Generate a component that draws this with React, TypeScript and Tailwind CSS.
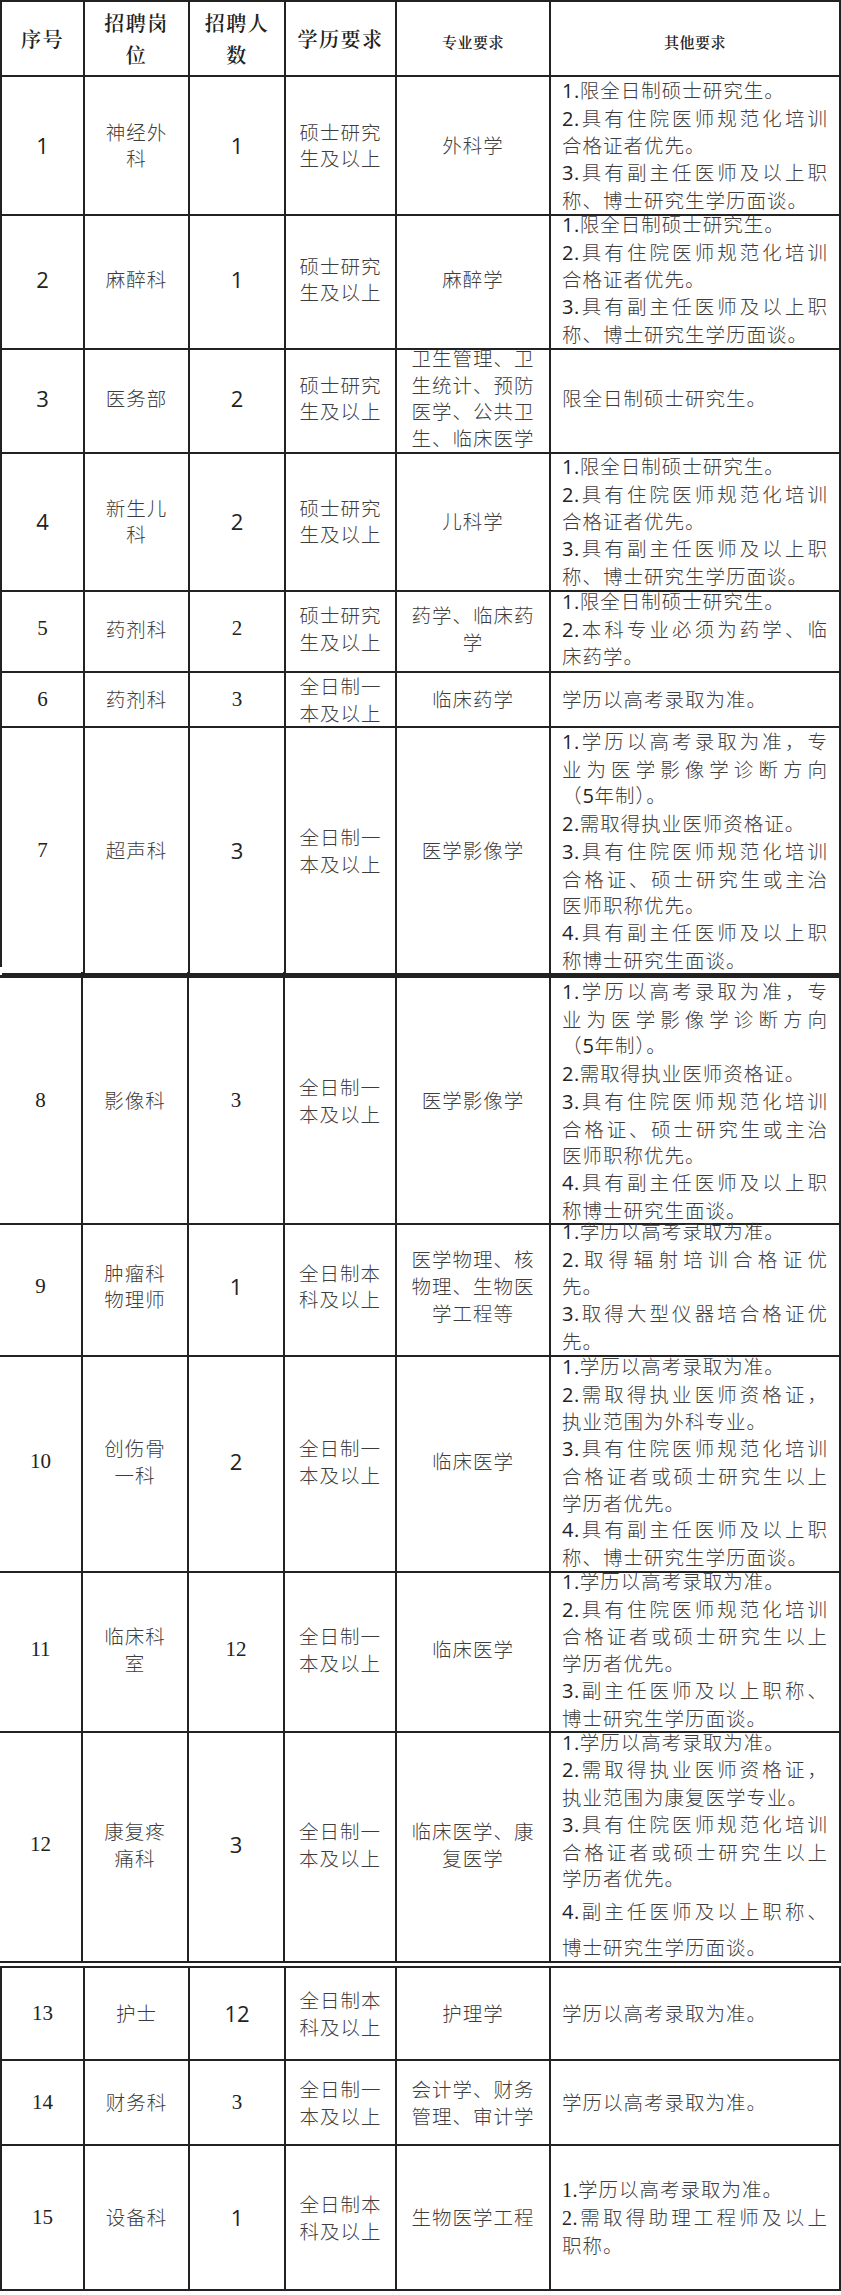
import React from "react";

type Line = string | { t: string; cls: string };
type Row = {
  seq: string;
  seqSerif: boolean;
  post: string[];
  count: string;
  countSerif: boolean;
  edu: string[];
  major: string[];
  other: Line[];
  h: string;
  prefixSerif?: boolean;
};

const BODY = "font-['Noto_Sans_CJK_SC','Noto_Sans',sans-serif] font-light text-[19.5px] tracking-[1px] leading-[26.7px] text-[#3d3d3d]";
const SANS_NUM = "font-['Open_Sans','Noto_Sans',sans-serif] text-[22px] text-[#222]";
const SERIF_NUM = "font-['Liberation_Serif',serif] text-[21px] text-[#222]";
const HEAD = "font-['Noto_Serif_CJK_SC','Noto_Sans_CJK_SC',serif] font-semibold text-[#222]";

const colsA = "grid grid-cols-[83px_105px_96px_111px_154px_290px]";
const colsB = "grid grid-cols-[83px_106px_96px_112px_154px_290px]";
const cellBase = "border-r-2 border-b-2 border-[#222] flex items-center justify-center text-center";

const otherMain: Line[] = [
  "1.限全日制硕士研究生。",
  "2.具有住院医师规范化培训",
  "合格证者优先。",
  "3.具有副主任医师及以上职",
  "称、博士研究生学历面谈。",
];

const otherImg: Line[] = [
  "1.学历以高考录取为准，专",
  "业为医学影像学诊断方向",
  "（5年制）。",
  "2.需取得执业医师资格证。",
  "3.具有住院医师规范化培训",
  "合格证、硕士研究生或主治",
  "医师职称优先。",
  "4.具有副主任医师及以上职",
  "称博士研究生面谈。",
];

const master = ["硕士研究", "生及以上"];
const fullOne = ["全日制一", "本及以上"];
const fullBen = ["全日制本", "科及以上"];

const rowsA: Row[] = [
  { seq: "1", seqSerif: false, post: ["神经外", "科"], count: "1", countSerif: false, edu: master, major: ["外科学"], other: otherMain, h: "h-[134px]" },
  { seq: "2", seqSerif: false, post: ["麻醉科"], count: "1", countSerif: false, edu: master, major: ["麻醉学"], other: otherMain, h: "h-[134px]" },
  { seq: "3", seqSerif: false, post: ["医务部"], count: "2", countSerif: false, edu: master, major: ["卫生管理、卫", "生统计、预防", "医学、公共卫", "生、临床医学"], other: ["限全日制硕士研究生。"], h: "h-[108px]" },
  { seq: "4", seqSerif: false, post: ["新生儿", "科"], count: "2", countSerif: false, edu: master, major: ["儿科学"], other: otherMain, h: "h-[134px]" },
  { seq: "5", seqSerif: true, post: ["药剂科"], count: "2", countSerif: true, edu: master, major: ["药学、临床药", "学"], other: ["1.限全日制硕士研究生。", "2.本科专业必须为药学、临", "床药学。"], h: "h-[86px]" },
  { seq: "6", seqSerif: true, post: ["药剂科"], count: "3", countSerif: true, edu: fullOne, major: ["临床药学"], other: ["学历以高考录取为准。"], h: "h-[55px]" },
  { seq: "7", seqSerif: true, post: ["超声科"], count: "3", countSerif: false, edu: fullOne, major: ["医学影像学"], other: otherImg, h: "h-[239px]" },
];

const rowsB: Row[] = [
  { seq: "8", seqSerif: true, post: ["影像科"], count: "3", countSerif: true, edu: fullOne, major: ["医学影像学"], other: otherImg, h: "h-[240px]" },
  { seq: "9", seqSerif: true, post: ["肿瘤科", "物理师"], count: "1", countSerif: false, edu: fullBen, major: ["医学物理、核", "物理、生物医", "学工程等"], other: ["1.学历以高考录取为准。", "2.取得辐射培训合格证优", "先。", "3.取得大型仪器培合格证优", "先。"], h: "h-[135px]" },
  { seq: "10", seqSerif: true, post: ["创伤骨", "一科"], count: "2", countSerif: false, edu: fullOne, major: ["临床医学"], other: ["1.学历以高考录取为准。", "2.需取得执业医师资格证，", "执业范围为外科专业。", "3.具有住院医师规范化培训", "合格证者或硕士研究生以上", "学历者优先。", "4.具有副主任医师及以上职", "称、博士研究生学历面谈。"], h: "h-[215px]" },
  { seq: "11", seqSerif: true, post: ["临床科", "室"], count: "12", countSerif: true, edu: fullOne, major: ["临床医学"], other: ["1.学历以高考录取为准。", "2.具有住院医师规范化培训", "合格证者或硕士研究生以上", "学历者优先。", "3.副主任医师及以上职称、", "博士研究生学历面谈。"], h: "h-[160px]" },
  { seq: "12", seqSerif: true, post: ["康复疼", "痛科"], count: "3", countSerif: false, edu: fullOne, major: ["临床医学、康", "复医学"], other: ["1.学历以高考录取为准。", "2.需取得执业医师资格证，", "执业范围为康复医学专业。", "3.具有住院医师规范化培训", "合格证者或硕士研究生以上", "学历者优先。", { t: "4.副主任医师及以上职称、", cls: "mt-[6px]" }, { t: "博士研究生学历面谈。", cls: "mt-[8px]" }], h: "h-[235px]" },
];

const rowsC: Row[] = [
  { seq: "13", seqSerif: true, post: ["护士"], count: "12", countSerif: false, edu: fullBen, major: ["护理学"], other: ["学历以高考录取为准。"], h: "h-[93px]" },
  { seq: "14", seqSerif: true, post: ["财务科"], count: "3", countSerif: true, edu: fullOne, major: ["会计学、财务", "管理、审计学"], other: ["学历以高考录取为准。"], h: "h-[85px]" },
  { seq: "15", seqSerif: true, post: ["设备科"], count: "1", countSerif: false, edu: fullBen, major: ["生物医学工程"], other: ["1.学历以高考录取为准。", "2.需取得助理工程师及以上", "职称。"], h: "h-[145px]", prefixSerif: true },
];

function renderText(s: string, serif: boolean) {
  const parts = s.split(/([0-9.]+)/);
  return parts.map((p, i) =>
    /^[0-9.]+$/.test(p) ? (
      <span
        key={i}
        className={
          serif
            ? "font-['Liberation_Serif',serif] text-[20px] font-normal text-[#222] tracking-[0.5px]"
            : "font-['Open_Sans',sans-serif] text-[20px] font-normal text-[#222] tracking-[0.5px]"
        }
      >
        {p}
      </span>
    ) : (
      <span key={i}>{p}</span>
    )
  );
}

function Lines({ lines }: { lines: string[] }) {
  return (
    <div className={BODY}>
      {lines.map((l, i) => (
        <div key={i} className="whitespace-nowrap">
          {l}
        </div>
      ))}
    </div>
  );
}

function Other({ lines, serif }: { lines: Line[]; serif?: boolean }) {
  return (
    <div className={BODY + " w-full"}>
      {lines.map((l, i) => {
        const t = typeof l === "string" ? l : l.t;
        const extra = typeof l === "string" ? "" : l.cls;
        const just = !t.endsWith("。");
        return (
          <div
            key={i}
            className={
              "whitespace-nowrap " +
              extra +
              (just ? " text-justify [text-align-last:justify]" : " text-left")
            }
          >
            {renderText(t, !!serif)}
          </div>
        );
      })}
    </div>
  );
}

function DataRow({ r, cols }: { r: Row; cols: string }) {
  return (
    <div className={cols + " " + r.h}>
      <div className={cellBase}>
        <span className={r.seqSerif ? SERIF_NUM : SANS_NUM}>{r.seq}</span>
      </div>
      <div className={cellBase}>
        <Lines lines={r.post} />
      </div>
      <div className={cellBase}>
        <span className={r.countSerif ? SERIF_NUM : SANS_NUM}>{r.count}</span>
      </div>
      <div className={cellBase}>
        <Lines lines={r.edu} />
      </div>
      <div className={cellBase}>
        <Lines lines={r.major} />
      </div>
      <div className="border-r-2 border-b-2 border-[#222] flex items-center pl-[11px] pr-[11px]">
        <Other lines={r.other} serif={r.prefixSerif} />
      </div>
    </div>
  );
}

export default function App() {
  return (
    <div className="w-[841px] h-[2295px] bg-white">
      <div className="border-l-2 border-t-2 border-[#222]">
        <div className={colsA + " h-[75px]"}>
          <div className={cellBase}>
            <div className={HEAD + " text-[20px] tracking-[1.5px] leading-[32px]"}>序号</div>
          </div>
          <div className={cellBase}>
            <div className={HEAD + " text-[20px] tracking-[1.5px] leading-[32px]"}>
              <div>招聘岗</div>
              <div>位</div>
            </div>
          </div>
          <div className={cellBase}>
            <div className={HEAD + " text-[20px] tracking-[1.5px] leading-[32px]"}>
              <div>招聘人</div>
              <div>数</div>
            </div>
          </div>
          <div className={cellBase}>
            <div className={HEAD + " text-[20px] tracking-[1.5px] leading-[32px]"}>学历要求</div>
          </div>
          <div className={cellBase}>
            <div className={HEAD + " text-[15px] font-bold tracking-[0.5px] leading-[20px] mt-[6px]"}>专业要求</div>
          </div>
          <div className={cellBase}>
            <div className={HEAD + " text-[15px] font-bold tracking-[0.5px] leading-[20px] mt-[6px]"}>其他要求</div>
          </div>
        </div>
        {rowsA.map((r) => (
          <DataRow key={r.seq} r={r} cols={colsA} />
        ))}
      </div>

      <div className="h-[5px]" />

      <div>
        <div className={colsB + " h-[3px]"}>
          <div className="border-r-2 border-[#222]" />
          <div className="border-r-2 border-[#222]" />
          <div className="border-r-2 border-[#222]" />
          <div className="border-r-2 border-[#222]" />
          <div className="border-r-2 border-[#222]" />
          <div className="border-r-2 border-[#222]" />
        </div>
        <div className="border-t-[3px] border-[#222]">
          {rowsB.map((r) => (
            <DataRow key={r.seq} r={r} cols={colsB} />
          ))}
        </div>
      </div>

      <div className="h-[3px]" />

      <div className="border-l-2 border-t-2 border-[#222]">
        {rowsC.map((r) => (
          <DataRow key={r.seq} r={r} cols={colsA} />
        ))}
      </div>
    </div>
  );
}
